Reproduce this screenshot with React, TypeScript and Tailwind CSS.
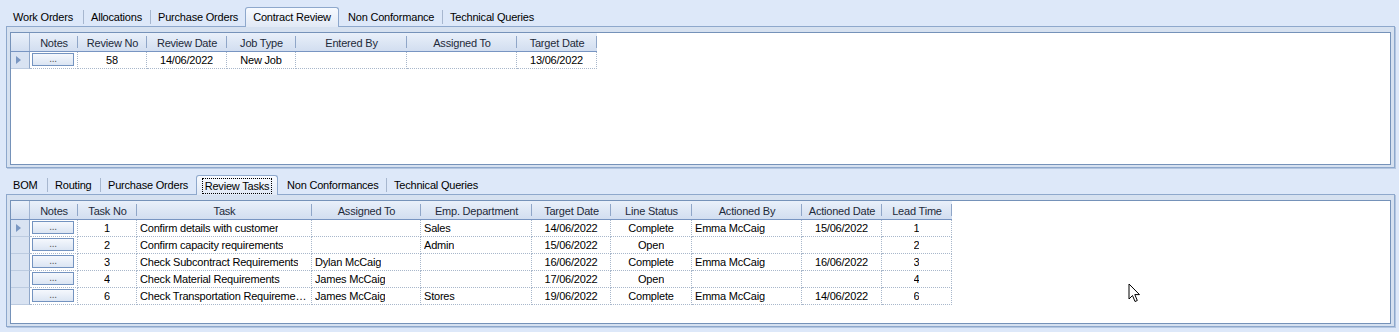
import React from 'react'

type Col = { label: string; w: number; align?: 'left' | 'center' }

// Columnas de la rejilla superior (Contract Review)
const reviewCols: Col[] = [
  { label: 'Notes', w: 48 },
  { label: 'Review No', w: 69 },
  { label: 'Review Date', w: 80 },
  { label: 'Job Type', w: 69 },
  { label: 'Entered By', w: 111 },
  { label: 'Assigned To', w: 110 },
  { label: 'Target Date', w: 80 },
]

const reviewRows = [['', '58', '14/06/2022', 'New Job', '', '', '13/06/2022']]

// Columnas de la rejilla inferior (Review Tasks)
const taskCols: Col[] = [
  { label: 'Notes', w: 48 },
  { label: 'Task No', w: 59 },
  { label: 'Task', w: 175, align: 'left' },
  { label: 'Assigned To', w: 109, align: 'left' },
  { label: 'Emp. Department', w: 111, align: 'left' },
  { label: 'Target Date', w: 79 },
  { label: 'Line Status', w: 81 },
  { label: 'Actioned By', w: 110, align: 'left' },
  { label: 'Actioned Date', w: 80 },
  { label: 'Lead Time', w: 70 },
]

const taskRows = [
  ['', '1', 'Confirm details with customer', '', 'Sales', '14/06/2022', 'Complete', 'Emma McCaig', '15/06/2022', '1'],
  ['', '2', 'Confirm capacity requirements', '', 'Admin', '15/06/2022', 'Open', '', '', '2'],
  ['', '3', 'Check Subcontract Requirements', 'Dylan McCaig', '', '16/06/2022', 'Complete', 'Emma McCaig', '16/06/2022', '3'],
  ['', '4', 'Check Material Requirements', 'James McCaig', '', '17/06/2022', 'Open', '', '', '4'],
  ['', '6', 'Check Transportation Requirements', 'James McCaig', 'Stores', '19/06/2022', 'Complete', 'Emma McCaig', '14/06/2022', '6'],
]

type Tab = { label: string; w: number; selected?: boolean; focus?: boolean }

function TabStrip({ tabs }: { tabs: Tab[] }) {
  return (
    <div className="flex h-[18px] items-stretch relative z-10">
      {tabs.map((t, i) => {
        const prev = tabs[i - 1]
        const showSep = i > 0 && !t.selected && !prev?.selected
        if (t.selected) {
          return (
            <div key={t.label} style={{ width: t.w }} className="flex px-[2px]">
              <div className="-mt-[1px] h-[20px] flex-1 flex items-center justify-center rounded-t-[3px] border border-b-0 border-[#8ea8cc] bg-gradient-to-b from-[#f7faff] to-[#e1e9f5]">
                <span className={t.focus ? 'px-[2px] leading-[14px] outline-1 outline-dotted outline-black' : ''}>
                  {t.label}
                </span>
              </div>
            </div>
          )
        }
        return (
          <div key={t.label} style={{ width: t.w }} className="flex items-center">
            {showSep && <div className="h-[14px] w-px bg-[#a7b7cf]" />}
            <span className="pl-[7px] whitespace-nowrap">{t.label}</span>
          </div>
        )
      })}
    </div>
  )
}

function NotesButton() {
  return (
    <div className="h-full pl-[2px] pr-[3px] pt-[1px] pb-[2px]">
      <div className="h-full border border-[#7393c0] bg-gradient-to-b from-[#f5f8fd] to-[#dbe5f3] flex items-center justify-center text-[10px] text-[#555] leading-none pb-[2px]">
        ...
      </div>
    </div>
  )
}

function Grid({ cols, rows }: { cols: Col[]; rows: string[][] }) {
  return (
    <div className="flex-1 border border-[#7592b9] bg-white overflow-hidden">
      {/* Cabecera */}
      <div className="flex h-[19px] w-max border-b border-[#7895c2] bg-gradient-to-b from-[#e9f0fa] to-[#d2def0] text-[#1e2a3a]">
        <div className="w-[19px] border-r border-[#9fb3d1]" />
        {cols.map((c) => (
          <div key={c.label} style={{ width: c.w }} className="relative flex items-center justify-center whitespace-nowrap pt-[2px]">
            {c.label}
            <div className="absolute right-0 top-[3px] bottom-[3px] w-px bg-[#8fa6c8]" />
          </div>
        ))}
      </div>
      {/* Filas */}
      {rows.map((r, ri) => (
        <div key={ri} className="flex h-[17px] w-max">
          <div className="w-[19px] border-r border-b border-r-[#8fa7c9] border-b-[#bccbe0] bg-[#d9e3f2] flex items-center pl-[5px]">
            {ri === 0 && (
              <svg width="5" height="8" viewBox="0 0 5 8">
                <path d="M0 0 L5 4 L0 8 Z" fill="#7a97c2" />
              </svg>
            )}
          </div>
          {cols.map((c, ci) => (
            <div
              key={c.label}
              style={{ width: c.w }}
              className={
                'min-w-0 border-r border-b border-dotted border-[#a8b7cb] flex items-center overflow-hidden ' +
                (ci === 0 ? '' : 'pt-[1px] ') +
                (c.align === 'left' ? 'justify-start pl-[3px] pr-[4px]' : 'justify-center')
              }
            >
              {ci === 0 ? (
                <div className="w-full h-full">
                  <NotesButton />
                </div>
              ) : (
                <span className="block min-w-0 truncate">{r[ci]}</span>
              )}
            </div>
          ))}
        </div>
      ))}
    </div>
  )
}

function Panel({ children, h }: { children: React.ReactNode; h: number }) {
  return (
    <div
      style={{ height: h }}
      className="flex flex-col border border-[#8ea8cc] bg-[#d6e1f0] pt-[5px] px-[3px] pb-[2px] shadow-[1px_1px_0_#b4c6e0]"
    >
      {children}
    </div>
  )
}

function Cursor() {
  return (
    <svg className="absolute left-[1128px] top-[283px]" width="14" height="21" viewBox="0 0 14 21">
      <path
        d="M1 1 L1 16 L4.5 12.5 L7 18.5 L9.3 17.5 L6.8 11.6 L11.5 11.6 Z"
        fill="#fff"
        stroke="#000"
        strokeWidth="1"
        strokeLinejoin="round"
      />
    </svg>
  )
}

export default function App() {
  return (
    <div
      className="relative w-[1399px] h-[332px] overflow-hidden bg-[#dde8f9] text-[11px] tracking-[-0.2px] text-black leading-none pt-[8px] pl-[6px] pr-[4px]"
      style={{ fontFamily: '"Liberation Sans", Arial, sans-serif' }}
    >
      <TabStrip
        tabs={[
          { label: 'Work Orders', w: 77 },
          { label: 'Allocations', w: 67 },
          { label: 'Purchase Orders', w: 93 },
          { label: 'Contract Review', w: 98, selected: true },
          { label: 'Non Conformance', w: 101 },
          { label: 'Technical Queries', w: 110 },
        ]}
      />
      <Panel h={142}>
        <Grid cols={reviewCols} rows={reviewRows} />
      </Panel>

      <div className="h-[8px]" />

      <TabStrip
        tabs={[
          { label: 'BOM', w: 41 },
          { label: 'Routing', w: 53 },
          { label: 'Purchase Orders', w: 94 },
          { label: 'Review Tasks', w: 86, selected: true, focus: true },
          { label: 'Non Conformances', w: 106 },
          { label: 'Technical Queries', w: 110 },
        ]}
      />
      <Panel h={133}>
        <Grid cols={taskCols} rows={taskRows} />
      </Panel>

      <Cursor />
    </div>
  )
}
